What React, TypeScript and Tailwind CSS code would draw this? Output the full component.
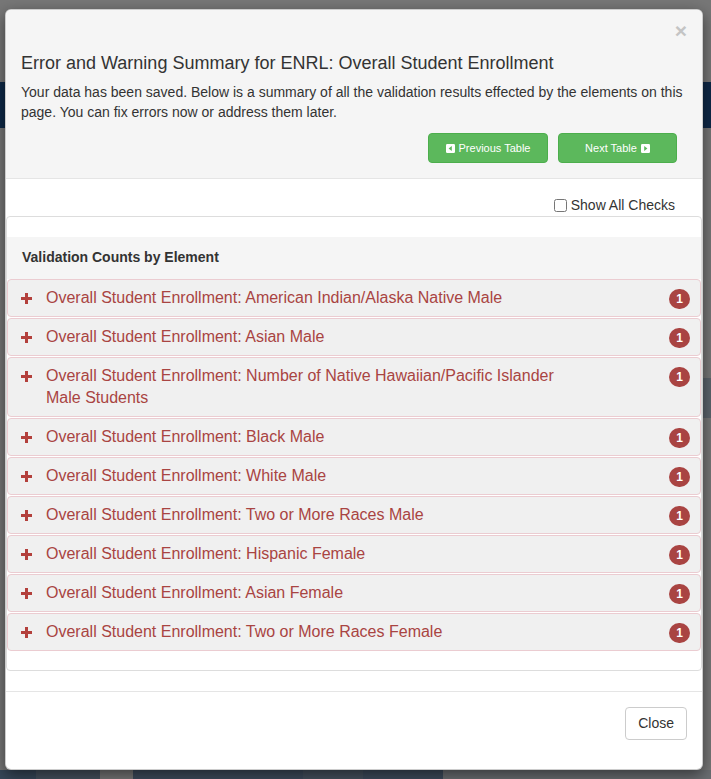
import React from "react";

const FONT = "font-['Liberation_Sans','Helvetica_Neue',Helvetica,Arial,sans-serif]";

const ELEMENTS = [
  "Overall Student Enrollment: American Indian/Alaska Native Male",
  "Overall Student Enrollment: Asian Male",
  "Overall Student Enrollment: Number of Native Hawaiian/Pacific Islander Male Students",
  "Overall Student Enrollment: Black Male",
  "Overall Student Enrollment: White Male",
  "Overall Student Enrollment: Two or More Races Male",
  "Overall Student Enrollment: Hispanic Female",
  "Overall Student Enrollment: Asian Female",
  "Overall Student Enrollment: Two or More Races Female",
];

function CaretSquare({ dir }: { dir: "left" | "right" }) {
  return (
    <svg width="9" height="9" viewBox="0 0 9 9" className="shrink-0">
      <rect x="0" y="0" width="9" height="9" rx="1.2" fill="#ffffff" />
      {dir === "left" ? (
        <polygon points="5.8,2 5.8,7 2.6,4.5" fill="#5cb85c" />
      ) : (
        <polygon points="3.2,2 3.2,7 6.4,4.5" fill="#5cb85c" />
      )}
    </svg>
  );
}

function PlusIcon() {
  return (
    <svg width="11" height="11" viewBox="0 0 11 11" className="shrink-0 mt-[6px]">
      <rect x="0" y="4" width="11" height="3" fill="#b3403c" />
      <rect x="4" y="0" width="3" height="11" fill="#b3403c" />
    </svg>
  );
}

function ElementRow({ label, count }: { label: string; count: number }) {
  return (
    <div className="mb-[1px] flex items-start rounded-[4px] border border-[#ebccd1] bg-[#f0f0f0] py-[7px] pl-[13px] pr-[10px]">
      <PlusIcon />
      <span className="ml-[14px] w-[530px] text-[16px] leading-[22px] text-[#a94442]">{label}</span>
      <span className="ml-auto mt-[2px] flex h-[20px] w-[21px] items-center justify-center rounded-full bg-[#a94442] text-[12px] font-bold leading-none text-white">
        {count}
      </span>
    </div>
  );
}

export default function App() {
  return (
    <div className={`relative h-[779px] w-[711px] overflow-hidden bg-[#eeeeee] ${FONT}`}>
      {/* page behind the dialog */}
      <div className="h-[82px]" />
      <div className="h-[46px] bg-[#1d5290]" />
      <div className="flex h-[642px] justify-end">
        <div className="mt-[250px] h-[40px] w-[10px] bg-[#b8c8d8]" />
      </div>
      <div className="flex h-[9px]">
        <div className="w-[36px] bg-[#6f8fb2]" />
        <div className="w-[64px] bg-[#8aa2bc]" />
        <div className="w-[33px] bg-[#eeeeee]" />
        <div className="w-[170px] bg-[#7a97b8]" />
        <div className="w-[60px] bg-[#8aa2bc]" />
        <div className="w-[80px] bg-[#7a97b8]" />
        <div className="flex-1 bg-[#d6dde5]" />
      </div>

      {/* backdrop */}
      <div className="absolute inset-0 bg-black/50" />

      {/* dialog */}
      <div className="absolute left-[5px] top-[9px] w-[698px] overflow-hidden rounded-[6px] border border-black/20 bg-white text-[#333333] shadow-[0_5px_15px_rgba(0,0,0,0.5)]">
        <div className="border-b border-[#e5e5e5] bg-[#f5f5f5] px-[15px] pb-[15px] pt-[14px]">
          <div className="flex h-[22px] justify-end">
            <span className="-mt-[4px] h-[22px] text-[21px] font-bold leading-[22px] text-[#c4c4c4]">×</span>
          </div>
          <h4 className="mt-[7px] text-[18px] leading-[20px]">
            Error and Warning Summary for ENRL: Overall Student Enrollment
          </h4>
          <p className="mt-[9px] text-[14px] leading-[20px]">
            Your data has been saved. Below is a summary of all the validation results effected by the elements on this
            page. You can fix errors now or address them later.
          </p>
          <div className="mt-[11px] flex justify-end gap-[10px] pr-[10px]">
            <button className="flex h-[30px] w-[120px] items-center justify-center gap-[4px] rounded-[4px] border border-[#4cae4c] bg-[#5cb85c] text-[11px] text-white">
              <CaretSquare dir="left" />
              Previous Table
            </button>
            <button className="flex h-[30px] w-[119px] items-center justify-center gap-[4px] rounded-[4px] border border-[#4cae4c] bg-[#5cb85c] text-[11px] text-white">
              Next Table
              <CaretSquare dir="right" />
            </button>
          </div>
        </div>

        <div className="pb-[20px]">
          <label className="mb-[1px] flex items-center justify-end pr-[27px] pt-[16px] text-[14px] leading-[20px]">
            <input type="checkbox" className="m-0 mr-[4px] h-[13px] w-[13px]" />
            Show All Checks
          </label>
          <div className="rounded-[4px] border border-[#dddddd] bg-white">
            <div className="h-[20px]" />
            <div className="bg-[#f5f5f5] px-[15px] pb-[12px] pt-[10px] text-[14px] font-bold leading-[20px]">
              Validation Counts by Element
            </div>
            {ELEMENTS.map((label) => (
              <ElementRow key={label} label={label} count={1} />
            ))}
            <div className="h-[18px]" />
          </div>
        </div>

        <div className="flex justify-end border-t border-[#e5e5e5] px-[15px] pb-[29px] pt-[15px]">
          <button className="h-[33px] rounded-[4px] border border-[#cccccc] bg-white px-[12px] text-[14px] text-[#333333]">
            Close
          </button>
        </div>
      </div>
    </div>
  );
}
